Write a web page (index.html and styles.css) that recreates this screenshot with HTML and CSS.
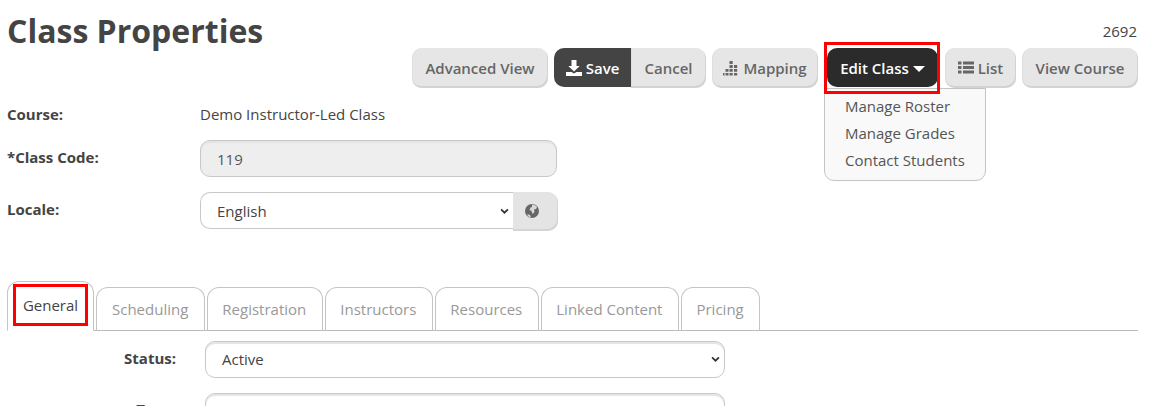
FILE: index.html
```html
<!DOCTYPE html>
<html lang="en">
<head>
<meta charset="utf-8">
<title>Class Properties</title>
<link rel="stylesheet" href="styles.css">
</head>
<body>
<div class="page">
  <header class="head">
    <h1 class="title">Class Properties</h1>
    <div class="head-right">
      <div class="record-id">2692</div>
      <div class="toolbar">
        <button class="btn btn-advanced">Advanced View</button>
        <div class="group">
          <button class="btn btn-dark group-first">
            <svg class="icon" viewBox="0 0 16 16"><path d="M5.500 0h5v6h3.200L8 11.600 2.300 6h3.200zM0 12h5.500l2.500 1.500 2.500-1.500H16v4H0z" fill="currentColor"/></svg>Save</button><button class="btn btn-cancel group-last">Cancel</button>
        </div>
        <button class="btn btn-mapping">
          <svg class="icon" viewBox="0 0 16 16"><path d="M6.500 1h3.200v3H6.500zM6.500 5h3.200v3H6.500zM11 5h3.200v3H11zM2.500 9h3v2.800h-3zM6.500 9h3.200v2.800H6.500zM11 9h3.200v2.800H11zM0 13h1.500v2.500H0zM2.500 13h3v2.500h-3zM6.500 13h3.200v2.500H6.500zM11 13h3.200v2.500H11z" fill="currentColor"/></svg>Mapping</button>
        <div class="edit-wrap">
          <button class="btn btn-black">Edit Class<span class="caret"></span></button>
          <ul class="menu">
            <li>Manage Roster</li>
            <li>Manage Grades</li>
            <li>Contact Students</li>
          </ul>
        </div>
        <button class="btn btn-list">
          <svg class="icon" viewBox="0 0 16 16"><path d="M0 1.500h3.500v3H0zM5 1.500h11v3H5zM0 6h3.500v3H0zM5 6h11v3H5zM0 10.500h3.500v3H0zM5 10.500h11v3H5z" fill="currentColor"/></svg>List</button>
        <button class="btn btn-view">View Course</button>
      </div>
    </div>
  </header>

  <section class="form">
    <div class="label">Course:</div>
    <div class="value">Demo Instructor-Led Class</div>
    <div class="label">*Class Code:</div>
    <div class="input input-disabled">119</div>
    <div class="label">Locale:</div>
    <div class="locale">
      <div class="input select locale-select">English<svg class="chev" viewBox="0 0 10 7"><path d="M1 1.500l4 4 4-4" fill="none" stroke="currentColor" stroke-width="2"/></svg></div>
      <div class="addon">
        <svg class="globe" viewBox="0 0 16 16"><circle cx="8" cy="8" r="7" fill="#666"/><path d="M8 1.500c2 0 4 1 5 2.500l-1 2-2 .5.500 2.500-2 2-1-3-2-1 1-2.500 1.500-.5zM3 11l3 1 1 2.500c-2-.2-3.200-1.500-4-3.500z" fill="#d8d8d8"/></svg>
      </div>
    </div>
  </section>

  <nav class="tabs">
    <div class="tab tab-active"><span class="marked-tab">General</span></div>
    <div class="tab tab-scheduling">Scheduling</div>
    <div class="tab">Registration</div>
    <div class="tab">Instructors</div>
    <div class="tab">Resources</div>
    <div class="tab">Linked Content</div>
    <div class="tab tab-pricing">Pricing</div>
  </nav>

  <section class="tab-form">
    <div class="label label-right">Status:</div>
    <div class="input select status">Active<svg class="chev" viewBox="0 0 10 7"><path d="M1 1.500l4 4 4-4" fill="none" stroke="currentColor" stroke-width="2"/></svg></div>
    <div class="label label-right label-type">Type:</div>
    <div class="input select status"></div>
  </section>
</div>
</body>
</html>
```
FILE: styles.css
```css
*, *::before, *::after { box-sizing: border-box; }
html, body { margin: 0; height: 406px; overflow: hidden; background: #fff; }
body { font-family: "Open Sans", sans-serif; font-size: 15px; color: #444; }
.page { width: 1131px; height: 406px; margin-left: 7px; overflow: hidden; }

.head { display: flex; justify-content: space-between; align-items: flex-start; height: 88px; }
.title { margin: 9px 0 0; font-size: 32px; line-height: 44px; font-weight: 700; color: #444; }
.head-right { display: flex; flex-direction: column; align-items: flex-end; }
.record-id { margin: 21px 1px 0 0; height: 19px; line-height: 20px; font-size: 15px; color: #444; }
.toolbar { display: flex; align-items: flex-start; gap: 6px; margin-top: 8px; }

.btn { display: flex; flex: none; align-items: center; justify-content: center; height: 40px; padding: 0; border: 0; border-radius: 10px; background: #e6e6e6; box-shadow: inset -1px -2px 0 #d2d2d2, inset 1px 0 0 #dedede; font: 600 15px/20px "Open Sans", sans-serif; color: #666; white-space: nowrap; }
.btn-advanced { width: 136px; }
.btn-cancel { width: 75px; }
.btn-mapping { width: 106px; }
.btn-list { width: 71px; }
.btn-view { width: 116px; }
.icon { width: 16px; height: 16px; margin-right: 4px; }
.group { display: flex; flex: none; }
.group-first { border-radius: 10px 0 0 10px; }
.group-last { border-radius: 0 10px 10px 0; }
.btn-dark { width: 77px; background: #444; color: #fff; box-shadow: none; height: 39px; }
.btn-black { background: #2b2b2b; color: #fff; box-shadow: none; height: 39px; width: 111px; }
.caret { width: 0; height: 0; margin-left: 4px; margin-top: 2px; border-left: 6px solid transparent; border-right: 6px solid transparent; border-top: 6px solid #fff; }

.edit-wrap { position: relative; flex: none; width: 111px; margin: 0 1px 0 3px; }
.edit-wrap::before { content: ""; position: absolute; z-index: 3; left: -3px; top: -6px; width: 116px; height: 52px; border: 3px solid #f00; pointer-events: none; }
.menu { position: absolute; left: -3px; top: 40px; z-index: 2; width: 162px; height: 93px; margin: 0; padding: 5px 0 0; list-style: none; background: #f9f9f9; border: 1px solid #c4c4c4; border-radius: 0 0 10px 10px; }
.menu li { height: 27px; line-height: 25px; padding-left: 20px; color: #555; font-size: 15px; white-space: nowrap; }

.form { display: grid; grid-template-columns: 193px 358px; grid-template-rows: 52px 52px 37px; }
.label { font-weight: 700; font-size: 15px; color: #444; line-height: 20px; }
.form .label { padding-top: 16px; }
.form .label:nth-of-type(n+3) { padding-top: 7px; }
.value { padding-top: 16px; line-height: 20px; color: #444; }
.input { display: flex; align-items: center; height: 37px; padding: 0 16px; border: 1px solid #c8c8c8; border-radius: 10px; background: #fff; box-shadow: inset 0 2px 1px #e4e4e4; color: #444; }
.input-disabled { background: #eee; width: 357px; color: #555; }
.select { position: relative; justify-content: space-between; }
.status { padding-bottom: 2px; }
.chev { width: 9px; height: 6px; color: #333; flex: none; margin-right: -12px; }
.locale { display: flex; width: 358px; }
.locale-select { width: 313px; border-radius: 10px 0 0 10px; box-shadow: none; border-right: 0; }
.addon { display: flex; align-items: center; justify-content: center; width: 45px; height: 39px; background: #e4e4e4; border-radius: 0 10px 10px 0; box-shadow: inset -1px -2px 0 #d4d4d4; }
.globe { width: 16px; height: 16px; margin-right: 7px; margin-top: -2px; }

.tabs { display: flex; align-items: flex-end; gap: 2px; height: 52px; margin-top: 50px; border-bottom: 1px solid #bbb; }
.tab { display: flex; align-items: center; justify-content: center; height: 44px; margin-bottom: -1px; padding: 0 16px 0 14px; border: 1px solid #c4c4c4; border-bottom: 1px solid #bbb; border-radius: 12px 12px 0 0; background: #fff; color: #999; font-size: 15px; white-space: nowrap; }
.tab-scheduling { padding: 0 16px 0 15px; }
.tab-pricing { padding: 0 15px 0 14px; }
.tab-active { height: 50px; width: 87px; padding: 0; border-bottom-color: #fff; color: #444; }
.marked-tab { display: flex; align-items: center; justify-content: center; width: 75px; height: 42px; margin-top: -2px; border: 3px solid #f00; }

.tab-form { display: grid; grid-template-columns: 169px 520px; column-gap: 29px; grid-template-rows: 52px 52px; padding-top: 10px; width: 730px; }
.label-right { text-align: right; padding-top: 7px; }
.label-type { padding-top: 6px; }
```
